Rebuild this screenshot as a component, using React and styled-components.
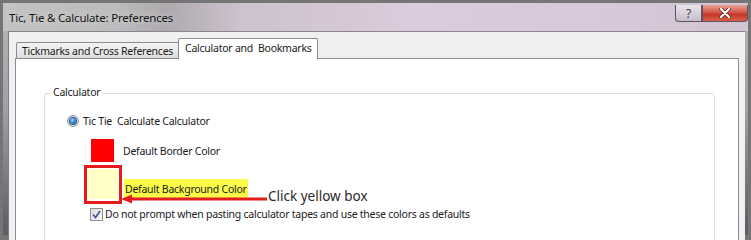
import React from 'react';
import styled, { createGlobalStyle } from 'styled-components';

const GlobalStyle = createGlobalStyle`
  html, body {
    margin: 0;
    padding: 0;
    background: #6e6e6e;
  }
  body {
    font-family: 'Noto Sans', 'Open Sans', sans-serif;
  }
`;

const Screen = styled.div`
  width: 751px;
  height: 240px;
  overflow: hidden;
  box-sizing: border-box;
  padding: 3px 3px 5px 3px;
  background: #757575;
  display: flex;
`;

const Window = styled.div`
  flex: 1;
  display: flex;
  flex-direction: column;
  background: linear-gradient(180deg, #b7b4b8 0%, #a4a0a6 45%, #5f5a63 100%);
`;

const TitleBar = styled.div`
  height: 28px;
  flex-shrink: 0;
  display: flex;
  align-items: flex-start;
  justify-content: space-between;
  background: linear-gradient(
    90deg,
    #c3c3c3 0%,
    #bdbbbd 15%,
    #aeaaae 22%,
    #cdc2ce 32%,
    #dccbdc 55%,
    #d9c8da 80%,
    #d1c4d3 100%
  );
`;

const Title = styled.span`
  margin: 7px 0 0 6px;
  font-size: 11.5px;
  letter-spacing: -0.2px;
  color: #141414;
  text-shadow: 0 0 6px rgba(255, 255, 255, 0.6);
`;

const Caption = styled.div`
  display: flex;
  margin-top: 2px;
`;

const CaptionButton = styled.div`
  height: 17px;
  width: ${p => p.width}px;
  box-sizing: border-box;
  display: flex;
  align-items: center;
  justify-content: center;
  border: 1px solid #5e5361;
  border-top: none;
  border-radius: ${p => p.radius};
  background: ${p => p.bg};
`;

const HelpMark = styled.span`
  color: #3e3846;
  font-size: 13px;
  line-height: 1;
  text-shadow: 0 0 2px #fff;
`;

const Client = styled.div`
  flex: 1;
  display: flex;
  flex-direction: column;
  margin: 0 3px 0 5px;
  padding: 6px 6px 0 6px;
  background: #f0f0f0;
  border-left: 1px solid #7d7a80;
  border-top: 1px solid #8a878c;
`;

const TabList = styled.div`
  display: flex;
  align-items: flex-end;
  height: 20px;
  padding-left: 1px;
`;

const Tab = styled.div`
  position: relative;
  box-sizing: border-box;
  display: flex;
  align-items: center;
  height: ${p => (p.active ? '21px' : '16px')};
  margin-bottom: ${p => (p.active ? '-1px' : '0')};
  margin-left: ${p => (p.active ? '-1px' : '0')};
  padding: ${p => (p.active ? '0 5px 2px 6px' : '0 5px')};
  border: 1px solid #898c95;
  border-bottom: none;
  border-radius: 2px 2px 0 0;
  background: ${p => (p.active ? '#ffffff' : 'linear-gradient(180deg, #f3f3f3 0%, #ebebeb 50%, #dcdcdc 100%)')};
  z-index: ${p => (p.active ? 1 : 0)};
  font-size: 10.5px;
  letter-spacing: -0.25px;
  color: #1a1a1a;
`;

const Panel = styled.div`
  flex: 1;
  background: #ffffff;
  border: 1px solid #898c95;
  border-bottom: none;
  padding: 34px 23px 0 28px;
`;

const GroupBox = styled.div`
  position: relative;
  height: 200px;
  border: 1px solid #d5dfe5;
  border-radius: 3px;
  padding: 19px 0 0 22px;
`;

const GroupLabel = styled.span`
  position: absolute;
  top: -9px;
  left: 5px;
  padding: 0 3px;
  background: #ffffff;
  font-size: 10.5px;
  letter-spacing: -0.25px;
  color: #1a1a1a;
`;

const Row = styled.div`
  position: relative;
  display: flex;
  align-items: center;
  gap: ${p => p.gap || 4}px;
  margin-top: ${p => p.top || 0}px;
  margin-left: ${p => p.indent || 0}px;
  font-size: 10.5px;
  letter-spacing: -0.25px;
  color: #1a1a1a;
  height: ${p => (p.height ? `${p.height}px` : 'auto')};
`;

const Radio = styled.span`
  width: 12px;
  height: 12px;
  box-sizing: border-box;
  border-radius: 50%;
  border: 1px solid #8b9098;
  background: radial-gradient(circle at 50% 40%, #f6f6f6 0%, #dcdcdc 100%);
  display: flex;
  align-items: center;
  justify-content: center;
`;

const RadioDot = styled.span`
  width: 6px;
  height: 6px;
  border-radius: 50%;
  background: radial-gradient(circle at 40% 35%, #a8dcff 0%, #3b8ad4 45%, #164f8c 100%);
  box-shadow: 0 0 0 1px #1d4f7e;
`;

const Swatch = styled.span`
  display: block;
  width: ${p => p.size}px;
  height: ${p => p.size}px;
  background: ${p => p.color};
  flex-shrink: 0;
`;

const Callout = styled.span`
  display: flex;
  padding: 1px;
  width: 30px;
  height: 31px;
  box-sizing: content-box;
  border: 3px solid #e31b1b;
  flex-shrink: 0;
`;

const Highlight = styled.span`
  align-self: flex-end;
  margin-bottom: 5px;
  display: flex;
  align-items: center;
  height: 20px;
  padding: 0 1px;
  background: #fbfb48;
`;

const Arrow = styled.svg`
  position: absolute;
  left: 37px;
  top: 29px;
`;

const Note = styled.span`
  position: absolute;
  left: 184px;
  top: 22px;
  font-size: 13.5px;
  letter-spacing: 0;
  color: #2a2a2a;
  white-space: nowrap;
`;

const CheckBox = styled.span`
  width: 13px;
  height: 13px;
  box-sizing: border-box;
  border: 1px solid #8f8f8f;
  background: linear-gradient(135deg, #dcdcdc 0%, #fafafa 100%);
  display: flex;
  align-items: center;
  justify-content: center;
  flex-shrink: 0;
`;

const CloseIcon = () => (
  <svg width="14" height="10" viewBox="0 0 14 10">
    <path d="M3 1 L11 9 M11 1 L3 9" stroke="#5a2a2a" strokeWidth="3.6" strokeLinecap="round" />
    <path d="M3 1 L11 9 M11 1 L3 9" stroke="#ffffff" strokeWidth="2.2" strokeLinecap="round" />
  </svg>
);

const CheckMark = () => (
  <svg width="9" height="9" viewBox="0 0 9 9">
    <path d="M1 4.5 L3.5 7.5 L8 1" fill="none" stroke="#3e5a97" strokeWidth="1.7" />
  </svg>
);

export default function App() {
  return (
    <Screen>
      <GlobalStyle />
      <Window>
        <TitleBar>
          <Title>Tic, Tie &amp; Calculate: Preferences</Title>
          <Caption>
            <CaptionButton
              width={27}
              radius="0 0 0 4px"
              bg="linear-gradient(180deg, #e9e5ec 0%, #d8d0dc 50%, #c6bccb 100%)"
            >
              <HelpMark>?</HelpMark>
            </CaptionButton>
            <CaptionButton
              width={46}
              radius="0 0 4px 0"
              bg="linear-gradient(180deg, #e8a598 0%, #d4574a 45%, #c4362a 60%, #d9614c 100%)"
            >
              <CloseIcon />
            </CaptionButton>
          </Caption>
        </TitleBar>
        <Client>
          <TabList>
            <Tab>Tickmarks and Cross References</Tab>
            <Tab active>Calculator and&nbsp; Bookmarks</Tab>
          </TabList>
          <Panel>
            <GroupBox>
              <GroupLabel>Calculator</GroupLabel>
              <Row height={16}>
                <Radio>
                  <RadioDot />
                </Radio>
                <span>Tic Tie&nbsp; Calculate Calculator</span>
              </Row>
              <Row indent={24} top={10} gap={9}>
                <Swatch size={23} color="#ff0000" />
                <span>Default Border Color</span>
              </Row>
              <Row indent={17} top={3} gap={2}>
                <Callout>
                  <Swatch size={30} color="#ffffc8" />
                </Callout>
                <Highlight>Default Background Color</Highlight>
                <Arrow width="146" height="10" viewBox="0 0 146 10">
                  <rect x="8" y="3.5" width="138" height="3" fill="#e21d1d" />
                  <path d="M0 5 L11 0.5 L11 9.5 Z" fill="#e21d1d" />
                </Arrow>
                <Note>Click yellow box</Note>
              </Row>
              <Row indent={23} top={2} gap={2} height={16}>
                <CheckBox>
                  <CheckMark />
                </CheckBox>
                <span>Do not prompt when pasting calculator tapes and use these colors as defaults</span>
              </Row>
            </GroupBox>
          </Panel>
        </Client>
      </Window>
    </Screen>
  );
}
